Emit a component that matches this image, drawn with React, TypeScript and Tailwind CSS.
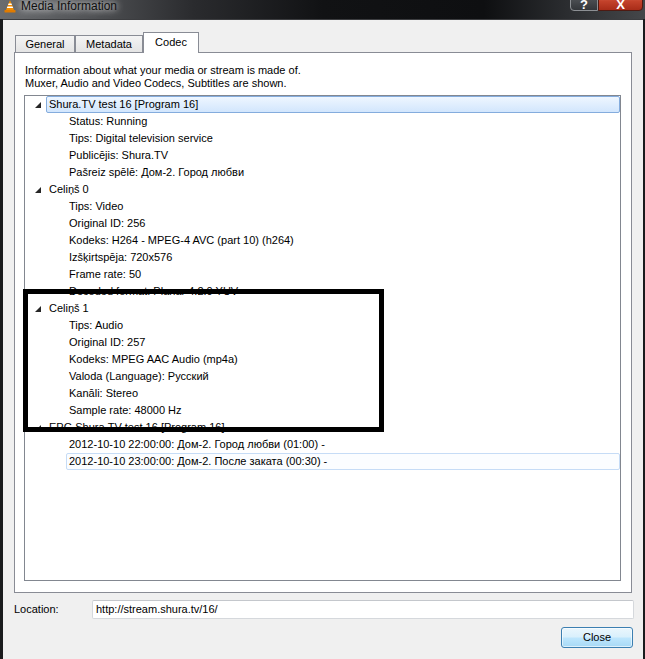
import React from "react";

type Row = { text: string; level: 0 | 1; state?: "sel" | "hover" };

const rows: Row[] = [
  { text: "Shura.TV test 16 [Program 16]", level: 0, state: "sel" },
  { text: "Status: Running", level: 1 },
  { text: "Tips: Digital television service", level: 1 },
  { text: "Publicējis: Shura.TV", level: 1 },
  { text: "Pašreiz spēlē: Дом-2. Город любви", level: 1 },
  { text: "Celiņš 0", level: 0 },
  { text: "Tips: Video", level: 1 },
  { text: "Original ID: 256", level: 1 },
  { text: "Kodeks: H264 - MPEG-4 AVC (part 10) (h264)", level: 1 },
  { text: "Izšķirtspēja: 720x576", level: 1 },
  { text: "Frame rate: 50", level: 1 },
  { text: "Decoded format: Planar 4:2:0 YUV", level: 1 },
  { text: "Celiņš 1", level: 0 },
  { text: "Tips: Audio", level: 1 },
  { text: "Original ID: 257", level: 1 },
  { text: "Kodeks: MPEG AAC Audio (mp4a)", level: 1 },
  { text: "Valoda (Language): Русский", level: 1 },
  { text: "Kanāli: Stereo", level: 1 },
  { text: "Sample rate: 48000 Hz", level: 1 },
  { text: "EPG Shura.TV test 16 [Program 16]", level: 0 },
  { text: "2012-10-10 22:00:00: Дом-2. Город любви (01:00) -", level: 1 },
  { text: "2012-10-10 23:00:00: Дом-2. После заката (00:30) -", level: 1, state: "hover" },
];

function Arrow() {
  return (
    <svg width="6" height="6" viewBox="0 0 6 6" className="block">
      <polygon points="6,0 6,6 0,6" fill="#262626" />
    </svg>
  );
}

function Cone() {
  return (
    <svg width="12" height="13" viewBox="0 0 12 13" className="block">
      <polygon points="6,0 10,10 2,10" fill="#f28c00" />
      <polygon points="4.6,3.5 7.4,3.5 8.0,5 4.0,5" fill="#ffffff" />
      <polygon points="3.4,6.5 8.6,6.5 9.2,8 2.8,8" fill="#ffffff" />
      <rect x="0.5" y="10" width="11" height="2.5" rx="0.6" fill="#e07b00" />
    </svg>
  );
}

export default function App() {
  return (
    <div className="relative w-[645px] h-[659px] overflow-hidden flex flex-col bg-[#1a1b1d] font-['Liberation_Sans',Arial,sans-serif] text-[11px] text-black">
      {/* title bar */}
      <div className="h-[19px] flex items-start bg-[linear-gradient(90deg,#6a6c6f_0%,#55575a_12%,#2a2b2e_30%,#111214_50%,#0e0f11_75%,#2b2d30_88%,#45474a_100%)]">
        <div className="ml-[4px]">
          <Cone />
        </div>
        <span className="ml-[5px] leading-[12px] text-[12px] text-[#101010] [text-shadow:0_0_6px_rgba(255,255,255,0.9),0_0_10px_rgba(255,255,255,0.6)]">
          Media Information
        </span>
        <div className="ml-auto mr-[2px] flex -mt-[8px]">
          <div className="w-[28px] h-[19px] border border-[#8d9094] rounded-bl-[4px] bg-[linear-gradient(180deg,#5a5d61,#33363a)] flex items-end justify-center overflow-hidden">
            <span className="text-white font-bold text-[13px] leading-[13px] -mb-[1px]">?</span>
          </div>
          <div className="w-[45px] h-[19px] border border-[#4e1a12] rounded-br-[4px] bg-[linear-gradient(180deg,#e0735c,#c2412a_50%,#a82c18)] flex items-end justify-center overflow-hidden">
            <span className="text-white font-bold text-[13px] leading-[13px] -mb-[1px]">X</span>
          </div>
        </div>
      </div>

      {/* body */}
      <div className="flex-1 ml-[3px] mr-[2px] border-t border-[#3c3d40] bg-[#f0f0f0] pl-[11px] pt-[12px] flex flex-col">
        {/* tabs */}
        <div className="h-[21px] flex items-end pl-[1px]">
          <div className="w-[60px] h-[17px] mb-[1px] border-l border-t border-r border-[#898c95] bg-[linear-gradient(180deg,#f4f4f4,#e4e4e4)] flex items-center justify-center pt-[1px]">
            General
          </div>
          <div className="w-[68px] h-[17px] mb-[1px] border-l border-t border-r border-[#898c95] bg-[linear-gradient(180deg,#f4f4f4,#e4e4e4)] flex items-center justify-center pt-[1px]">
            Metadata
          </div>
          <div className="relative z-10 w-[56px] h-[21px] border-l border-t border-r border-[#898c95] bg-white flex items-center justify-center pb-[1px]">
            Codec
          </div>
        </div>

        {/* pane */}
        <div className="w-[618px] h-[541px] -mt-[1px] border border-[#898c95] bg-white pt-[11px] pl-[10px] flex flex-col">
          <div className="leading-[13px]">
            <div>Information about what your media or stream is made of.</div>
            <div>Muxer, Audio and Video Codecs, Subtitles are shown.</div>
          </div>
          <div className="mt-[5px] -ml-[1px] w-[597px] h-[486px] border border-[#828790] bg-white flex flex-col">
            {rows.map((r, i) => (
              <div key={i} className="h-[17px] flex items-center">
                {r.level === 0 ? (
                  <div className="w-[21px] h-[17px] flex items-start pl-[10px] pt-[6px]">
                    <Arrow />
                  </div>
                ) : (
                  <div className="w-[41px]" />
                )}
                <div
                  className={
                    "flex-1 h-[17px] flex items-center leading-[15px] " +
                    (r.state === "sel"
                      ? "border border-[#84acdd] rounded-[2px] bg-[linear-gradient(180deg,#eef6ff,#d2e6fd)] pl-[2px]"
                      : r.state === "hover"
                      ? "border border-[#c6dcf6] rounded-[2px] bg-[#fbfdff] pl-[2px]"
                      : "pl-[3px]")
                  }
                >
                  {r.text}
                </div>
              </div>
            ))}
          </div>
        </div>

        {/* location */}
        <div className="mt-[7px] flex items-center h-[19px]">
          <div className="w-[78px]">Location:</div>
          <div className="w-[542px] h-[19px] border border-[#d5d8dc] border-t-[#c4c7cc] rounded-[2px] bg-white flex items-center pl-[3px]">
            http://stream.shura.tv/16/
          </div>
        </div>

        {/* close */}
        <div className="mt-[8px] w-[619px] flex justify-end">
          <div className="w-[72px] h-[21px] border border-[#3c7fb1] rounded-[3px] bg-[linear-gradient(180deg,#eaf6fd_0%,#d9f0fc_48%,#bee6fd_52%,#a7d9f5_100%)] shadow-[inset_0_0_0_1px_rgba(255,255,255,0.6)] flex items-center justify-center">
            Close
          </div>
        </div>
      </div>

      {/* annotation rectangle */}
      <div className="absolute left-[23px] top-[289px] w-[361px] h-[143px] border-[5px] border-black pointer-events-none" />
    </div>
  );
}
